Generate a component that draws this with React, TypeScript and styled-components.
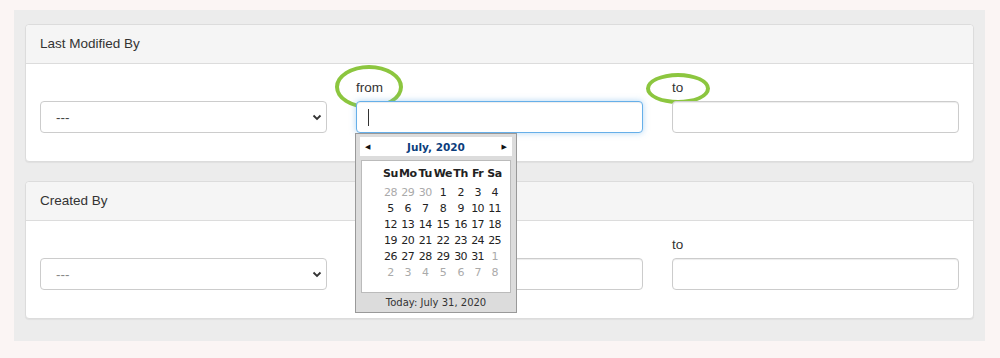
import React from "react";
import styled, { createGlobalStyle } from "styled-components";

const GlobalStyle = createGlobalStyle`
  body {
    margin: 0;
    background: #fbf5f4;
    font-family: "Liberation Sans", Arial, sans-serif;
    color: #333;
  }
`;

const weeks: { d: number; muted?: boolean }[][] = [
  [{ d: 28, muted: true }, { d: 29, muted: true }, { d: 30, muted: true }, { d: 1 }, { d: 2 }, { d: 3 }, { d: 4 }],
  [{ d: 5 }, { d: 6 }, { d: 7 }, { d: 8 }, { d: 9 }, { d: 10 }, { d: 11 }],
  [{ d: 12 }, { d: 13 }, { d: 14 }, { d: 15 }, { d: 16 }, { d: 17 }, { d: 18 }],
  [{ d: 19 }, { d: 20 }, { d: 21 }, { d: 22 }, { d: 23 }, { d: 24 }, { d: 25 }],
  [{ d: 26 }, { d: 27 }, { d: 28 }, { d: 29 }, { d: 30 }, { d: 31 }, { d: 1, muted: true }],
  [2, 3, 4, 5, 6, 7, 8].map((d) => ({ d, muted: true })),
];

const dayNames = ["Su", "Mo", "Tu", "We", "Th", "Fr", "Sa"];

const Calendar: React.FC = () => (
  <CalBox>
    <CalHead>
      <Arrow>&#9664;</Arrow>
      <MonthTitle>July, 2020</MonthTitle>
      <Arrow>&#9654;</Arrow>
    </CalHead>
    <CalGrid>
      <DayTable>
        <thead>
          <tr>
            {dayNames.map((n) => (
              <DayHead key={n}>{n}</DayHead>
            ))}
          </tr>
        </thead>
        <tbody>
          {weeks.map((w, i) => (
            <tr key={i}>
              {w.map((c, j) => (
                <DayCell key={j} $muted={c.muted}>
                  {c.d}
                </DayCell>
              ))}
            </tr>
          ))}
        </tbody>
      </DayTable>
    </CalGrid>
    <CalFoot>Today: July 31, 2020</CalFoot>
  </CalBox>
);

const Chevron: React.FC = () => (
  <svg width="10" height="7" viewBox="0 0 10 7">
    <path d="M1.5 1.5 L5 5 L8.5 1.5" fill="none" stroke="#333" strokeWidth="1.8" />
  </svg>
);

interface FilterProps {
  title: string;
  focused?: boolean;
  circled?: boolean;
  mutedSelect?: boolean;
}

const FilterPanel: React.FC<FilterProps> = ({ title, focused, circled, mutedSelect }) => (
  <Panel>
    <PanelHeader>{title}</PanelHeader>
    <PanelBody>
      <Field>
        <SelectBox $muted={mutedSelect}>
          <span>---</span>
          <Chevron />
        </SelectBox>
      </Field>
      <Field>
        <Label>
          from
          {circled && <Ring $w={68} $h={44} $left={-21} $top={-15} />}
        </Label>
        <InputWrap>
          <Input $focused={focused}>{focused && <Caret />}</Input>
          {focused && <Calendar />}
        </InputWrap>
      </Field>
      <Field>
        <Label>
          to
          {circled && <Ring $w={64} $h={31} $left={-26} $top={-7} />}
        </Label>
        <InputWrap>
          <Input />
        </InputWrap>
      </Field>
    </PanelBody>
  </Panel>
);

const App: React.FC = () => (
  <>
    <GlobalStyle />
    <Page>
      <Well>
        <FilterPanel title="Last Modified By" focused circled />
        <FilterPanel title="Created By" mutedSelect />
      </Well>
    </Page>
  </>
);

const Page = styled.div`
  padding: 10px 15px 16px 14px;
`;

const Well = styled.div`
  background: #ececec;
  padding: 14px 11px 22px 11px;
  display: flex;
  flex-direction: column;
  gap: 19px;
`;

const Panel = styled.div`
  background: #fff;
  border: 1px solid #dcdcdc;
  border-radius: 4px;
  box-shadow: 0 1px 1px rgba(0, 0, 0, 0.05);
`;

const PanelHeader = styled.div`
  height: 38px;
  line-height: 38px;
  padding: 0 14px;
  background: #f5f5f5;
  border-bottom: 1px solid #dcdcdc;
  border-radius: 4px 4px 0 0;
  font-size: 13.5px;
  color: #333;
`;

const PanelBody = styled.div`
  display: grid;
  grid-template-columns: 1fr 1fr 1fr;
  column-gap: 29px;
  align-items: end;
  padding: 16px 14px 28px 14px;
`;

const Field = styled.div`
  display: flex;
  flex-direction: column;
`;

const Label = styled.label`
  position: relative;
  align-self: flex-start;
  font-size: 13.5px;
  line-height: 16px;
  margin-bottom: 5px;
  color: #333;
`;

const Ring = styled.span<{ $w: number; $h: number; $left: number; $top: number }>`
  position: absolute;
  left: ${(p) => p.$left}px;
  top: ${(p) => p.$top}px;
  width: ${(p) => p.$w}px;
  height: ${(p) => p.$h}px;
  box-sizing: border-box;
  border: 4px solid #8cc63f;
  border-radius: 50%;
  pointer-events: none;
`;

const InputWrap = styled.div`
  position: relative;
`;

const Input = styled.div<{ $focused?: boolean }>`
  height: 32px;
  box-sizing: border-box;
  border: 1px solid ${(p) => (p.$focused ? "#66afe9" : "#cccccc")};
  border-radius: 4px;
  background: #fff;
  box-shadow: ${(p) =>
    p.$focused
      ? "inset 0 1px 1px rgba(0,0,0,.075), 0 0 6px rgba(102,175,233,.5)"
      : "inset 0 1px 1px rgba(0,0,0,.075)"};
  display: flex;
  align-items: center;
  padding-left: 11px;
`;

const Caret = styled.span`
  width: 1px;
  height: 17px;
  background: #333;
`;

const SelectBox = styled.div<{ $muted?: boolean }>`
  height: 32px;
  box-sizing: border-box;
  border: 1px solid #cccccc;
  border-radius: 4px;
  background: #fff;
  display: flex;
  align-items: center;
  justify-content: space-between;
  padding: 0 4px 0 15px;
  font-size: 13.5px;
  color: ${(p) => (p.$muted ? "#888" : "#444")};
`;

const CalBox = styled.div`
  position: absolute;
  left: -1px;
  top: 100%;
  width: 162px;
  box-sizing: border-box;
  background: #dcdcdc;
  border: 1px solid #999;
  padding: 3px 4px 0 4px;
  font-family: "DejaVu Sans", Verdana, sans-serif;
  z-index: 2;
`;

const CalHead = styled.div`
  height: 19px;
  background: #fff;
  display: flex;
  align-items: center;
  justify-content: space-between;
  padding: 0 5px;
  margin: 0 0 4px 0;
`;

const Arrow = styled.span`
  font-size: 7px;
  color: #111;
`;

const MonthTitle = styled.span`
  font-size: 10.5px;
  font-weight: bold;
  color: #0b3d7c;
`;

const CalGrid = styled.div`
  background: #fff;
  border: 1px solid #bbb;
  margin: 0 1px;
  padding: 2px 0 12px 20px;
`;

const DayTable = styled.table`
  border-collapse: collapse;
  font-size: 11px;
`;

const DayHead = styled.th`
  width: 17px;
  height: 21px;
  padding: 0;
  text-align: center;
  font-weight: bold;
  color: #222;
  letter-spacing: -0.4px;
`;

const DayCell = styled.td<{ $muted?: boolean }>`
  width: 17px;
  height: 16px;
  padding: 0;
  text-align: center;
  color: ${(p) => (p.$muted ? "#aaa" : "#222")};
  letter-spacing: -0.5px;
`;

const CalFoot = styled.div`
  height: 19px;
  line-height: 19px;
  text-align: center;
  font-size: 10px;
  color: #333;
`;

export default App;
